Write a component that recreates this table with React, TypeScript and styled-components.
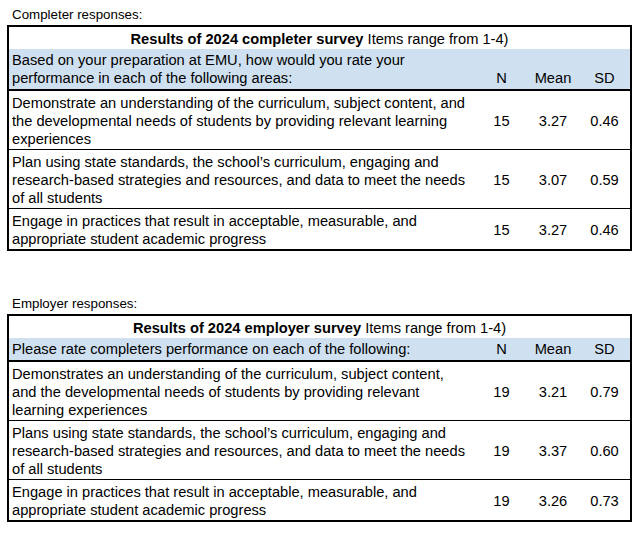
import React from "react";
import styled, { createGlobalStyle } from "styled-components";

const GlobalStyle = createGlobalStyle`
  html, body {
    margin: 0;
    padding: 0;
    background: #ffffff;
  }
  body {
    font-family: "Liberation Sans", Arial, sans-serif;
    color: #000000;
  }
`;

const Page = styled.div`
  display: flex;
  flex-direction: column;
  padding: 7px 0 0 7px;
  width: 640px;
  box-sizing: border-box;
`;

const Section = styled.section<{ $gap?: number }>`
  display: flex;
  flex-direction: column;
  margin-top: ${(p) => p.$gap ?? 0}px;
`;

const Caption = styled.div`
  font-size: 13.33px;
  line-height: 16px;
  padding-left: 5px;
  margin-bottom: 2px;
`;

const Table = styled.div`
  width: 625px;
  box-sizing: border-box;
  border: 2px solid #000000;
  font-size: 14.67px;
  line-height: 18px;
`;

const TitleRow = styled.div`
  text-align: center;
  padding: 3px 0 1px;
  white-space: nowrap;
`;

const Strong = styled.span`
  font-weight: 700;
`;

const Grid = styled.div`
  display: grid;
  grid-template-columns: 1fr 51px 52px 51px;
`;

const HeaderRow = styled(Grid)`
  background: #cfe0f1;
  border-bottom: 2px solid #000000;
  padding: 2px 0;
`;

const DataRow = styled(Grid)<{ $last?: boolean }>`
  border-bottom: ${(p) => (p.$last ? "none" : "1px solid #000000")};
  padding: 3px 0 1px;
  align-items: center;
`;

const Desc = styled.div`
  padding-left: 3px;
  white-space: nowrap;
  align-self: start;
`;

const Num = styled.div<{ $header?: boolean }>`
  text-align: center;
  align-self: ${(p) => (p.$header ? "end" : "center")};
`;

type Item = { lines: string[]; n: string; mean: string; sd: string };

type Survey = {
  caption: string;
  titleBold: string;
  titleRest: string;
  header: string[];
  items: Item[];
};

const surveys: Survey[] = [
  {
    caption: "Completer responses:",
    titleBold: "Results of 2024 completer survey",
    titleRest: " Items range from 1-4)",
    header: [
      "Based on your preparation at EMU, how would you rate your",
      "performance in each of the following areas:",
    ],
    items: [
      {
        lines: [
          "Demonstrate an understanding of the curriculum, subject content, and",
          "the developmental needs of students by providing relevant learning",
          "experiences",
        ],
        n: "15",
        mean: "3.27",
        sd: "0.46",
      },
      {
        lines: [
          "Plan using state standards, the school\u2019s curriculum, engaging and",
          "research-based strategies and resources, and data to meet the needs",
          "of all students",
        ],
        n: "15",
        mean: "3.07",
        sd: "0.59",
      },
      {
        lines: [
          "Engage in practices that result in acceptable, measurable, and",
          "appropriate student academic progress",
        ],
        n: "15",
        mean: "3.27",
        sd: "0.46",
      },
    ],
  },
  {
    caption: "Employer responses:",
    titleBold: "Results of 2024 employer survey",
    titleRest: " Items range from 1-4)",
    header: ["Please rate completers performance on each of the following:"],
    items: [
      {
        lines: [
          "Demonstrates an understanding of the curriculum, subject content,",
          "and the developmental needs of students by providing relevant",
          "learning experiences",
        ],
        n: "19",
        mean: "3.21",
        sd: "0.79",
      },
      {
        lines: [
          "Plans using state standards, the school\u2019s curriculum, engaging and",
          "research-based strategies and resources, and data to meet the needs",
          "of all students",
        ],
        n: "19",
        mean: "3.37",
        sd: "0.60",
      },
      {
        lines: [
          "Engage in practices that result in acceptable, measurable, and",
          "appropriate student academic progress",
        ],
        n: "19",
        mean: "3.26",
        sd: "0.73",
      },
    ],
  },
];

const Lines: React.FC<{ lines: string[] }> = ({ lines }) => (
  <>
    {lines.map((l, i) => (
      <React.Fragment key={i}>
        {i > 0 && <br />}
        {l}
      </React.Fragment>
    ))}
  </>
);

const SurveyTable: React.FC<{ survey: Survey; gap?: number }> = ({ survey, gap }) => (
  <Section $gap={gap}>
    <Caption>{survey.caption}</Caption>
    <Table>
      <TitleRow>
        <Strong>{survey.titleBold}</Strong>
        {survey.titleRest}
      </TitleRow>
      <HeaderRow>
        <Desc>
          <Lines lines={survey.header} />
        </Desc>
        <Num $header>N</Num>
        <Num $header>Mean</Num>
        <Num $header>SD</Num>
      </HeaderRow>
      {survey.items.map((it, i) => (
        <DataRow key={i} $last={i === survey.items.length - 1}>
          <Desc>
            <Lines lines={it.lines} />
          </Desc>
          <Num>{it.n}</Num>
          <Num>{it.mean}</Num>
          <Num>{it.sd}</Num>
        </DataRow>
      ))}
    </Table>
  </Section>
);

export default function App() {
  return (
    <>
      <GlobalStyle />
      <Page>
        <SurveyTable survey={surveys[0]} />
        <SurveyTable survey={surveys[1]} gap={45} />
      </Page>
    </>
  );
}
